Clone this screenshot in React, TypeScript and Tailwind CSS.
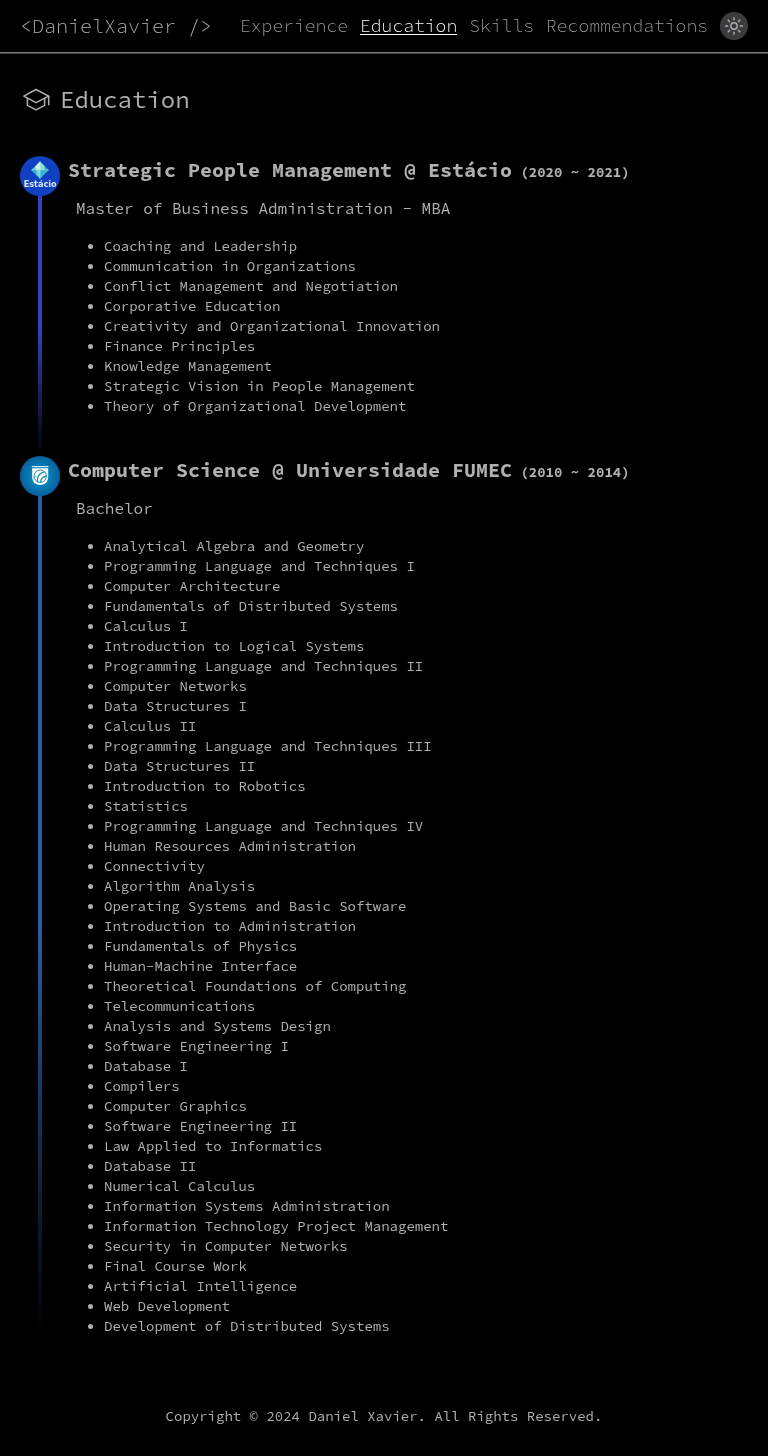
import type { ReactNode } from 'react';

const NAV = ['Experience', 'Education', 'Skills', 'Recommendations'];

const MBA = [
  'Coaching and Leadership',
  'Communication in Organizations',
  'Conflict Management and Negotiation',
  'Corporative Education',
  'Creativity and Organizational Innovation',
  'Finance Principles',
  'Knowledge Management',
  'Strategic Vision in People Management',
  'Theory of Organizational Development',
];

const BACHELOR = [
  'Analytical Algebra and Geometry',
  'Programming Language and Techniques I',
  'Computer Architecture',
  'Fundamentals of Distributed Systems',
  'Calculus I',
  'Introduction to Logical Systems',
  'Programming Language and Techniques II',
  'Computer Networks',
  'Data Structures I',
  'Calculus II',
  'Programming Language and Techniques III',
  'Data Structures II',
  'Introduction to Robotics',
  'Statistics',
  'Programming Language and Techniques IV',
  'Human Resources Administration',
  'Connectivity',
  'Algorithm Analysis',
  'Operating Systems and Basic Software',
  'Introduction to Administration',
  'Fundamentals of Physics',
  'Human-Machine Interface',
  'Theoretical Foundations of Computing',
  'Telecommunications',
  'Analysis and Systems Design',
  'Software Engineering I',
  'Database I',
  'Compilers',
  'Computer Graphics',
  'Software Engineering II',
  'Law Applied to Informatics',
  'Database II',
  'Numerical Calculus',
  'Information Systems Administration',
  'Information Technology Project Management',
  'Security in Computer Networks',
  'Final Course Work',
  'Artificial Intelligence',
  'Web Development',
  'Development of Distributed Systems',
];

function CapIcon() {
  return (
    <svg viewBox="0 0 32 32" className="size-8" fill="none" stroke="currentColor" strokeWidth="1.5" strokeLinejoin="round" strokeLinecap="round">
      <path d="M16 5.5 3.8 12.2 16 18.7l12.7-6.5z" />
      <path d="M7.400 14.200v7.200l8.600 4.500 8.600-4.500v-7.200" />
      <path d="M28.700 12.200v8.600" />
    </svg>
  );
}

function SunIcon() {
  return (
    <svg viewBox="0 0 20 20" className="size-5" fill="none" stroke="currentColor" strokeWidth="1.4">
      <circle cx="10" cy="10" r="3.2" />
      <path d="M10 1.200v3M10 15.800v3M1.200 10h3M15.800 10h3M3.800 3.800l2.100 2.100M14.100 14.100l2.100 2.100M3.800 16.200l2.100-2.100M14.100 5.900l2.100-2.100" />
    </svg>
  );
}

function EstacioLogo() {
  return (
    <svg viewBox="0 0 40 40" className="size-10">
      <circle cx="20" cy="20" r="20" fill="#1140c0" />
      <path d="M20 5.600 11.200 14 20 22.800z" fill="#5ccbd8" />
      <path d="M20 5.600 28.800 14 20 22.800z" fill="#36b7cb" />
      <path d="M20 5.600 15.600 10 16 13.600h4z" fill="#c9f0e6" />
      <path d="M20 5.600 24.600 10 25 13.600h-5z" fill="#8cdfdf" />
      <path d="M11.200 14h8.800v8.800z" fill="#2aa5c5" />
      <path d="M16 14h4v8l-3.600-3.600z" fill="#6fd3d8" />
      <path d="M24.500 10 28.800 14h-4z" fill="#2a9cc4" />
      <path d="M11.600 14q8.400-1.200 17 0M20 5.600v17" fill="none" stroke="#c4f0ec" strokeWidth=".5" />
      <text x="20.200" y="31" textAnchor="middle" textLength="33" lengthAdjust="spacingAndGlyphs" className="font-['DejaVu_Sans',sans-serif] text-[9px] font-bold" fill="#d6e6ff">Estácio</text>
    </svg>
  );
}

function FumecLogo() {
  return (
    <svg viewBox="0 0 40 40" className="size-10">
      <defs>
        <radialGradient id="fumec">
          <stop offset="0" stopColor="#1496cc" />
          <stop offset=".5" stopColor="#087eb8" />
          <stop offset="1" stopColor="#06609d" />
        </radialGradient>
      </defs>
      <circle cx="20" cy="20" r="20" fill="url(#fumec)" />
      <path d="M11.800 10h16.600v1.200H11.800z" fill="#d4effa" />
      <path d="M12.200 12.200h16v9q0 7.200-8 7.800-8-.6-8-7.800z" fill="#fff" />
      <circle cx="20.200" cy="20.200" r="6.200" fill="none" stroke="#1c8fac" strokeWidth="1" />
      <path d="M17.800 26.200c-1.400-5.600 1.200-9 7-10.600M20.600 26.200c0-3.600 2.200-5.400 5.800-6.400" fill="none" stroke="#168fa5" strokeWidth="1.300" />
      <path d="M14 21q2.200-1.400 3.600.6" fill="none" stroke="#5bb5c4" strokeWidth=".8" />
    </svg>
  );
}

interface EntryProps {
  logo: ReactNode;
  title: string;
  period: string;
  degree: string;
  courses: string[];
  line: string;
}

function Entry({ logo, title, period, degree, courses, line }: EntryProps) {
  return (
    <article className="flex gap-2">
      <div className="flex w-10 shrink-0 flex-col items-center">
        {logo}
        <div className={`w-1 flex-1 ${line}`} />
      </div>
      <div className="flex-1">
        <h2 className="h-7 text-[20px] leading-7 font-bold whitespace-nowrap">
          {title}
          <small className="ml-[8.4px] text-[14px]">({period})</small>
        </h2>
        <h3 className="mt-3 ml-2 text-base leading-6">{degree}</h3>
        <ul className="mt-4 pl-5 text-[14px] leading-5">
          {courses.map((course) => (
            <li key={course} className="flex gap-[11px] before:mt-2 before:size-[5px] before:rounded-full before:bg-current">
              {course}
            </li>
          ))}
        </ul>
      </div>
    </article>
  );
}

export default function App() {
  return (
    <div className="bg-black">
      <div className="flex min-h-[1456px] flex-col font-['Source_Code_Pro','Liberation_Mono',monospace] text-[#b0b0b0] will-change-transform">
        <header className="flex h-[53px] items-center justify-between border-b border-[#808080] px-5 shadow-[0_1px_1px_#383838]">
          <span className="text-[20px] font-light">{'<DanielXavier />'}</span>
          <nav className="flex items-center gap-3 text-[18px] font-light">
            {NAV.map((item) => (
              <a key={item} className={item === 'Education' ? 'h-[18px] border-b border-white leading-[18px] text-white' : 'h-[18px] leading-[18px] text-[#9c9c9c]'}>
                {item}
              </a>
            ))}
            <button className="flex size-7 items-center justify-center rounded-full bg-[#3c3c3e]">
              <SunIcon />
            </button>
          </nav>
        </header>
        <main className="flex flex-1 flex-col px-5 pt-[31px]">
          <h1 className="mb-10 flex h-8 items-center gap-2 text-2xl">
            <CapIcon />
            Education
          </h1>
          <div className="flex flex-col gap-10">
            <Entry
              logo={<EstacioLogo />}
              title="Strategic People Management @ Estácio"
              period="2020 ~ 2021"
              degree="Master of Business Administration - MBA"
              courses={MBA}
              line="-mb-10 bg-linear-to-b from-[#2f45c5] from-50% to-transparent"
            />
            <Entry
              logo={<FumecLogo />}
              title="Computer Science @ Universidade FUMEC"
              period="2010 ~ 2014"
              degree="Bachelor"
              courses={BACHELOR}
              line="bg-linear-to-b from-[#2c60a5] from-50% to-transparent"
            />
          </div>
        </main>
        <footer className="pb-[30px] text-center text-[14px] leading-5">Copyright © 2024 Daniel Xavier. All Rights Reserved.</footer>
      </div>
    </div>
  );
}
